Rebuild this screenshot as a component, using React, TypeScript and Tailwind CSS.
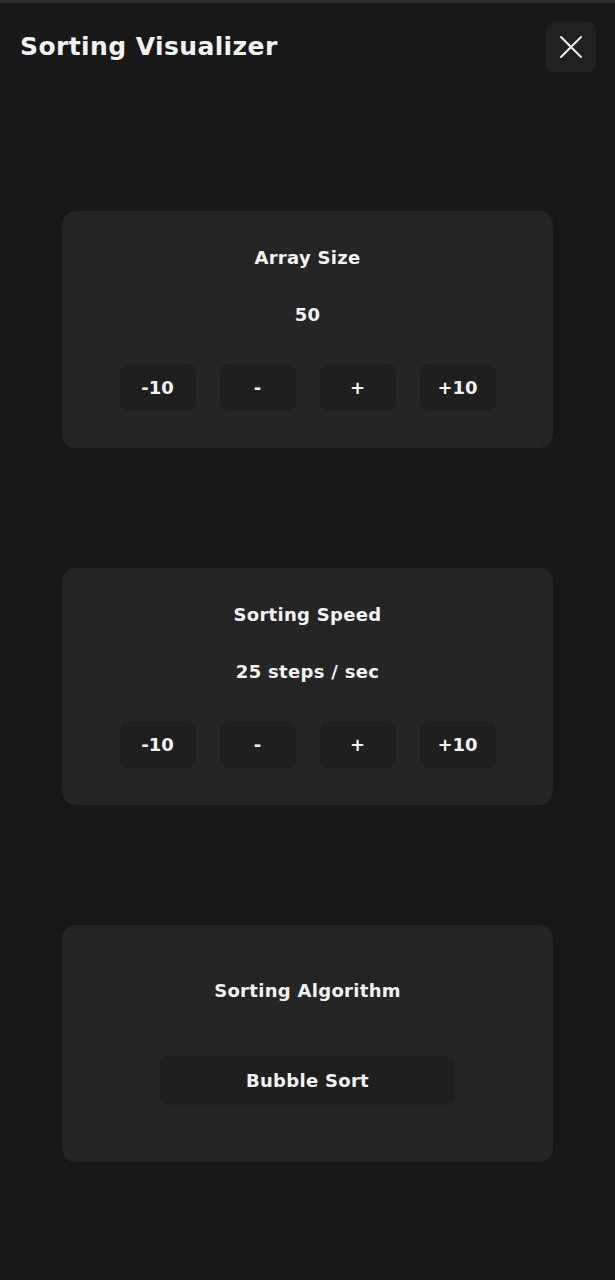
import React, { useState } from 'react';

const font = { fontFamily: '"DejaVu Sans", "Liberation Sans", sans-serif' };

function StepButton({ label, onClick }: { label: string; onClick: () => void }) {
  return (
    <button
      onClick={onClick}
      className="w-[76px] h-[47px] rounded-lg bg-[#1f1f1f] text-[#f2f2f2] text-[18px] font-bold flex items-center justify-center"
    >
      {label}
    </button>
  );
}

function Card({ children }: { children: React.ReactNode }) {
  return (
    <div className="w-[491px] h-[237px] rounded-[14px] bg-[#252525] flex flex-col items-center">
      {children}
    </div>
  );
}

export default function App() {
  const [size, setSize] = useState(50);
  const [speed, setSpeed] = useState(25);

  return (
    <div className="min-h-[1280px] w-full bg-[#181818] text-[#f2f2f2] border-t-[3px] border-[#2d2d2d]" style={font}>
      {/* Header */}
      <header className="flex items-center justify-between pl-5 pr-[19px] pt-[19px]">
        <h1 className="text-[25px] font-bold tracking-[0.4px]">Sorting Visualizer</h1>
        <button className="w-[50px] h-[50px] rounded-lg bg-[#212121] flex items-center justify-center">
          <svg width="24" height="24" viewBox="0 0 24 24" fill="none" stroke="#f2f2f2" strokeWidth="2" strokeLinecap="round">
            <path d="M2 2L22 22M22 2L2 22" />
          </svg>
        </button>
      </header>

      <main className="flex flex-col items-center pt-[139px] gap-[120px]">
        <Card>
          <h2 className="mt-[36px] text-[18px] font-bold leading-[22px] tracking-[0.3px]">Array Size</h2>
          <p className="mt-[35px] text-[18px] font-bold leading-[22px] tracking-[0.3px]">{size}</p>
          <div className="mt-[38px] flex gap-6">
            <StepButton label="-10" onClick={() => setSize(size - 10)} />
            <StepButton label="-" onClick={() => setSize(size - 1)} />
            <StepButton label="+" onClick={() => setSize(size + 1)} />
            <StepButton label="+10" onClick={() => setSize(size + 10)} />
          </div>
        </Card>

        <Card>
          <h2 className="mt-[36px] text-[18px] font-bold leading-[22px] tracking-[0.3px]">Sorting Speed</h2>
          <p className="mt-[35px] text-[18px] font-bold leading-[22px] tracking-[0.3px]">{speed} steps / sec</p>
          <div className="mt-[38px] flex gap-6">
            <StepButton label="-10" onClick={() => setSpeed(speed - 10)} />
            <StepButton label="-" onClick={() => setSpeed(speed - 1)} />
            <StepButton label="+" onClick={() => setSpeed(speed + 1)} />
            <StepButton label="+10" onClick={() => setSpeed(speed + 10)} />
          </div>
        </Card>

        <Card>
          <h2 className="mt-[55px] text-[18px] font-bold leading-[22px] tracking-[0.3px]">Sorting Algorithm</h2>
          <button className="mt-[54px] w-[295px] h-[49px] rounded-lg bg-[#1f1f1f] text-[18px] font-bold tracking-[0.3px]">
            Bubble Sort
          </button>
        </Card>
      </main>
    </div>
  );
}
